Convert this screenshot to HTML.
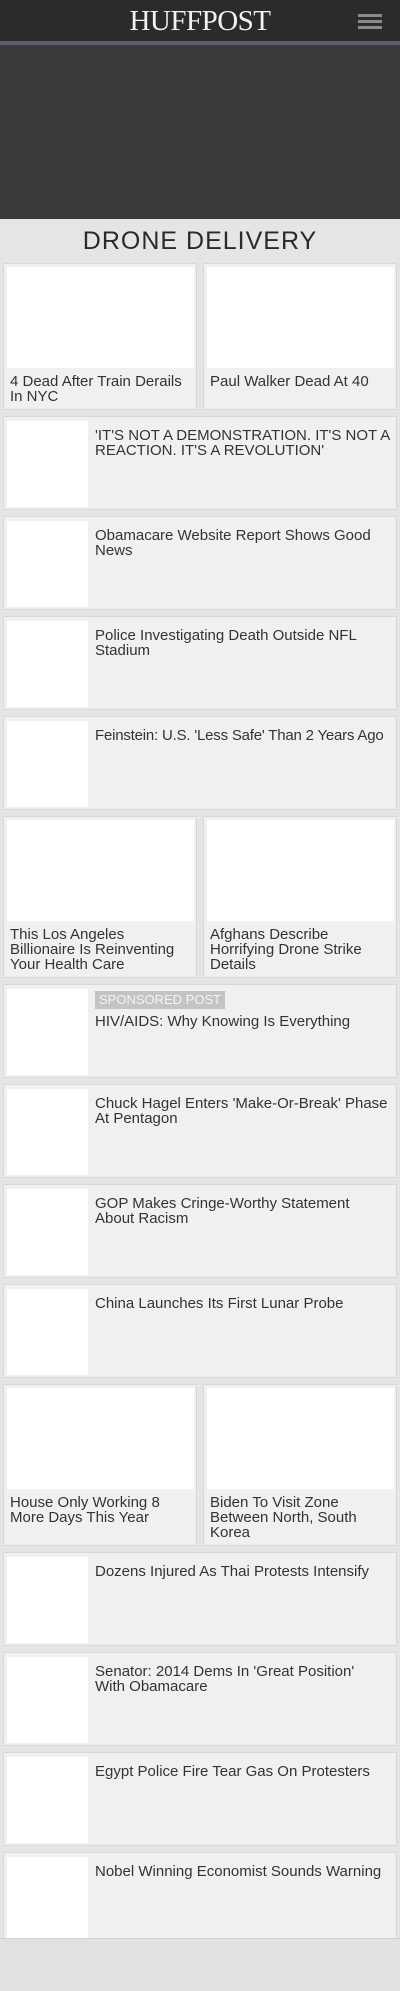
<!DOCTYPE html>
<html><head><meta charset="utf-8"><style>
*{margin:0;padding:0;box-sizing:border-box}
body{width:400px;height:1991px;background:#e2e2e2;font-family:"Liberation Sans",sans-serif;overflow:hidden;position:relative}
.hdr{position:absolute;left:0;top:0;width:400px;height:41px;background:#2b2b2b}
.logo{position:absolute;left:0;width:400px;top:5px;text-align:center;font-family:"Liberation Serif",serif;font-size:29px;color:#f2f2f2;letter-spacing:-0.5px;line-height:32px}
.ham{position:absolute;left:358px;width:24px;height:3px;background:#8a8a8a}
.stripe{position:absolute;top:41px;left:0;width:400px;height:4px;background:#5f5b6c}
.ad{position:absolute;top:45px;left:0;width:400px;height:174px;background:#3a3a3a}
.sec{position:absolute;top:219px;left:0;width:400px;height:1719px;background:#e5e5e5;overflow:hidden}
.ttl{position:absolute;top:7px;width:400px;text-align:center;font-size:25px;color:#2a2a2a;letter-spacing:1px;line-height:30px}
.c{position:absolute;background:#f0f0f0;border:1px solid #d8d8d8;color:#333;font-size:15px;line-height:15px}
.c .im{position:absolute;background:#fff}
.d .im{left:3px;top:3px;width:187px;height:101px}
.d .t{position:absolute;left:6px;top:110px;right:4px}
.s{left:3px;width:394px;height:94px}
.s .im{left:3px;top:4px;width:81px;height:86px}
.s .t{position:absolute;left:91px;top:11px;right:2px}
.sp{display:inline-block;background:#c4c4c4;color:#f4f4f4;font-size:13px;padding:2px 4px;line-height:14px;margin-bottom:5px}
</style></head><body>
<div class="hdr"><div class="logo">HUFFPOST</div>
<div class="ham" style="top:14px"></div><div class="ham" style="top:20px"></div><div class="ham" style="top:26px"></div></div>
<div class="stripe"></div>
<div class="ad"></div>
<div class="sec">
<div class="ttl">DRONE DELIVERY</div>
<div class="c d" style="left:3px;top:44px;width:194px;height:147px"><div class="im"></div><div class="t">4 Dead After Train Derails In NYC</div></div>
<div class="c d" style="left:203px;top:44px;width:194px;height:147px"><div class="im"></div><div class="t">Paul Walker Dead At 40</div></div>
<div class="c s" style="top:197px"><div class="im"></div><div class="t">'IT'S NOT A DEMONSTRATION. IT'S NOT A REACTION. IT'S A REVOLUTION'</div></div>
<div class="c s" style="top:297px"><div class="im"></div><div class="t">Obamacare Website Report Shows Good News</div></div>
<div class="c s" style="top:397px"><div class="im"></div><div class="t">Police Investigating Death Outside NFL Stadium</div></div>
<div class="c s" style="top:497px"><div class="im"></div><div class="t" style="white-space:nowrap;letter-spacing:-0.2px">Feinstein: U.S. 'Less Safe' Than 2 Years Ago</div></div>
<div class="c d" style="left:3px;top:597px;width:194px;height:162px"><div class="im"></div><div class="t">This Los Angeles Billionaire Is Reinventing Your Health Care</div></div>
<div class="c d" style="left:203px;top:597px;width:194px;height:162px"><div class="im"></div><div class="t">Afghans Describe Horrifying Drone Strike Details</div></div>
<div class="c s" style="top:765px"><div class="im"></div><div class="t" style="top:6px"><span class="sp">SPONSORED POST</span><br>HIV/AIDS: Why Knowing Is Everything</div></div>
<div class="c s" style="top:865px"><div class="im"></div><div class="t">Chuck Hagel Enters 'Make-Or-Break' Phase At Pentagon</div></div>
<div class="c s" style="top:965px"><div class="im"></div><div class="t">GOP Makes Cringe-Worthy Statement<br>About Racism</div></div>
<div class="c s" style="top:1065px"><div class="im"></div><div class="t">China Launches Its First Lunar Probe</div></div>
<div class="c d" style="left:3px;top:1165px;width:194px;height:162px"><div class="im"></div><div class="t">House Only Working 8 More Days This Year</div></div>
<div class="c d" style="left:203px;top:1165px;width:194px;height:162px"><div class="im"></div><div class="t">Biden To Visit Zone Between North, South Korea</div></div>
<div class="c s" style="top:1333px"><div class="im"></div><div class="t">Dozens Injured As Thai Protests Intensify</div></div>
<div class="c s" style="top:1433px"><div class="im"></div><div class="t">Senator: 2014 Dems In 'Great Position'<br>With Obamacare</div></div>
<div class="c s" style="top:1533px"><div class="im"></div><div class="t">Egypt Police Fire Tear Gas On Protesters</div></div>
<div class="c s" style="top:1633px"><div class="im"></div><div class="t">Nobel Winning Economist Sounds Warning</div></div>
</div>
<div style="position:absolute;top:1938px;left:0;width:400px;height:1px;background:#d0d0d0"></div>
</body></html>
